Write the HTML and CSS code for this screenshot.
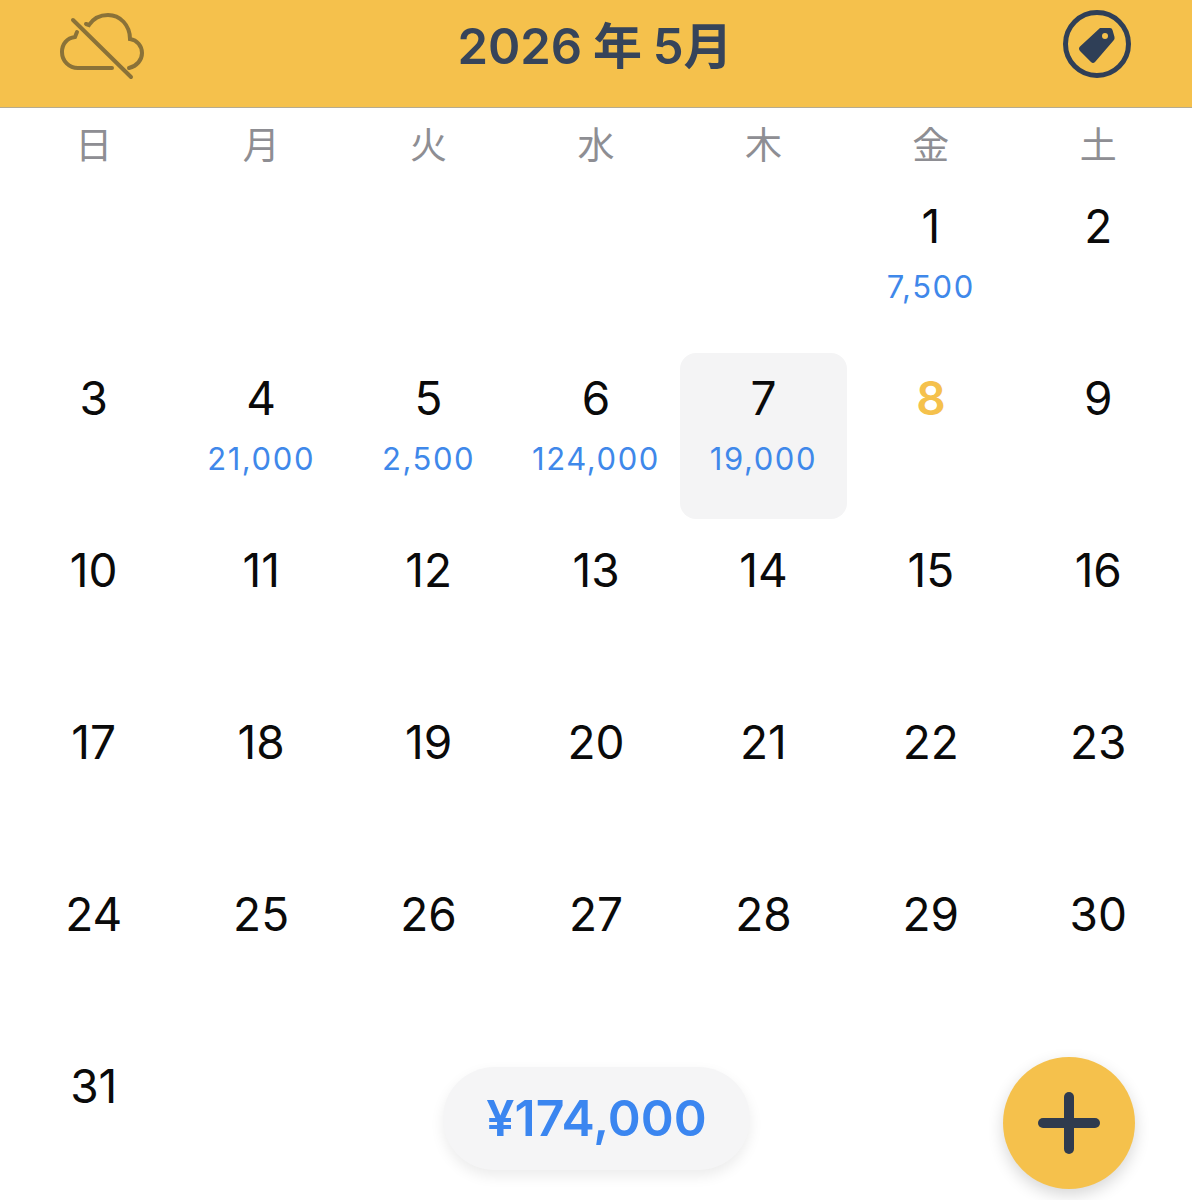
FILE: index.html
```html
<!DOCTYPE html>
<html lang="ja">
<head>
    <meta charset="UTF-8">
    <meta name="viewport" content="width=device-width, initial-scale=1.0">
    <title>2026年5月</title>
    <link rel="stylesheet" href="styles.css">
</head>
<body>
    <div class="page">
        <header class="header">
            <div class="header-side">
                <svg width="90" height="70" viewBox="58 12 90 70" fill="none" stroke="#8a7238" stroke-width="4" stroke-linecap="round">
                    <path d="M77 32 L75 37 C67 38 62 44 62 52 C62 61 69 68 78 68 L112 68"/>
                    <path d="M129 68 C137 66 142 60 142 53 C142 46 137 40 130 39 C130 25 120 15 108 15 C100 15 93 19 89 25 L86 24"/>
                    <path d="M73 20 L131 77"/>
                </svg>
            </div>
            <h1 class="title">2026 年 5月</h1>
            <div class="header-side header-side-right">
                <svg width="70" height="70" viewBox="1062 9 70 70">
                    <circle cx="1097" cy="44" r="31.500" fill="none" stroke="#2f3f57" stroke-width="5"/>
                    <path d="M1100 28 L1110 28 Q1112 28 1112.500 30 L1114.500 37 Q1115 39 1113.500 40.500 L1095 62 Q1093 64 1091 62 L1080 51 Q1078 48.500 1080 46.500 Z" fill="#2f3f57"/>
                    <circle cx="1105" cy="36" r="3" fill="#f5c14c"/>
                </svg>
            </div>
        </header>

        <div class="weekdays">
            <span>日</span><span>月</span><span>火</span><span>水</span><span>木</span><span>金</span><span>土</span>
        </div>

        <div class="calendar">
            <div class="day"></div><div class="day"></div><div class="day"></div><div class="day"></div><div class="day"></div>
            <div class="day"><span class="num">1</span><span class="amount">7,500</span></div>
            <div class="day"><span class="num">2</span></div>

            <div class="day"><span class="num">3</span></div>
            <div class="day"><span class="num">4</span><span class="amount">21,000</span></div>
            <div class="day"><span class="num">5</span><span class="amount">2,500</span></div>
            <div class="day"><span class="num">6</span><span class="amount">124,000</span></div>
            <div class="day selected"><span class="num">7</span><span class="amount">19,000</span></div>
            <div class="day today"><span class="num">8</span></div>
            <div class="day"><span class="num">9</span></div>

            <div class="day"><span class="num">10</span></div>
            <div class="day"><span class="num">11</span></div>
            <div class="day"><span class="num">12</span></div>
            <div class="day"><span class="num">13</span></div>
            <div class="day"><span class="num">14</span></div>
            <div class="day"><span class="num">15</span></div>
            <div class="day"><span class="num">16</span></div>

            <div class="day"><span class="num">17</span></div>
            <div class="day"><span class="num">18</span></div>
            <div class="day"><span class="num">19</span></div>
            <div class="day"><span class="num">20</span></div>
            <div class="day"><span class="num">21</span></div>
            <div class="day"><span class="num">22</span></div>
            <div class="day"><span class="num">23</span></div>

            <div class="day"><span class="num">24</span></div>
            <div class="day"><span class="num">25</span></div>
            <div class="day"><span class="num">26</span></div>
            <div class="day"><span class="num">27</span></div>
            <div class="day"><span class="num">28</span></div>
            <div class="day"><span class="num">29</span></div>
            <div class="day"><span class="num">30</span></div>

            <div class="day"><span class="num">31</span></div>
        </div>

        <div class="total">¥174,000</div>
        <button class="add-btn">
            <svg width="64" height="64" viewBox="0 0 64 64" fill="none" stroke="#2f3b4e" stroke-width="10" stroke-linecap="round">
                <path d="M32 6 L32 58"/>
                <path d="M6 32 L58 32"/>
            </svg>
        </button>
    </div>
</body>
</html>
```

FILE: styles.css
```css
* {
    margin: 0;
    padding: 0;
    box-sizing: border-box;
}
body {
    font-family: Inter, "Noto Sans CJK JP", sans-serif;
    background-color: white;
}
.page {
    position: relative;
    height: 1200px;
    overflow: hidden;
}
.header {
    height: 108px;
    padding: 0 60px 0 58px;
    display: grid;
    grid-template-columns: 1fr auto 1fr;
    align-items: start;
    background-color: #f5c14c;
    border-bottom: 1px solid #b5ab90;
}
.header-side {
    display: flex;
    margin-top: 12px;
}
.header-side-right {
    justify-content: flex-end;
    margin-top: 9px;
}
.title {
    margin-top: 17px;
    font-size: 49px;
    line-height: 60px;
    font-weight: 600;
    word-spacing: -1.5px;
    color: #36445a;
}
.weekdays {
    height: 73px;
    padding: 0 10px;
    display: grid;
    grid-template-columns: repeat(7, 1fr);
    text-align: center;
    font-family: "Noto Sans CJK JP", sans-serif;
    font-size: 37px;
    line-height: 71px;
    color: #8e8e93;
}
.calendar {
    padding: 0 10px;
    display: grid;
    grid-template-columns: repeat(7, 1fr);
    grid-auto-rows: 166px;
    row-gap: 6px;
}
.day {
    display: flex;
    flex-direction: column;
    align-items: center;
    border-radius: 16px;
}
.num {
    margin-top: 17px;
    font-size: 46px;
    line-height: 56px;
    color: #0a0a0a;
}
.amount {
    margin-top: 15px;
    font-size: 31px;
    line-height: 36px;
    letter-spacing: 1.6px;
    color: #3f88ea;
}
.selected {
    background-color: #f4f4f5;
}
.today .num {
    font-weight: 600;
    color: #f5c14c;
}
.total {
    position: absolute;
    left: 443px;
    top: 1067px;
    width: 307px;
    height: 103px;
    border-radius: 52px;
    background-color: #f5f5f6;
    box-shadow: 0 6px 14px rgba(0, 0, 0, 0.08);
    text-align: center;
    font-size: 50px;
    line-height: 103px;
    font-weight: 600;
    color: #3b86f0;
}
.add-btn {
    position: absolute;
    left: 1003px;
    top: 1057px;
    width: 132px;
    height: 132px;
    display: flex;
    justify-content: center;
    align-items: center;
    border: none;
    border-radius: 50%;
    background-color: #f5c14c;
    box-shadow: 0 6px 16px rgba(0, 0, 0, 0.16);
}
```
